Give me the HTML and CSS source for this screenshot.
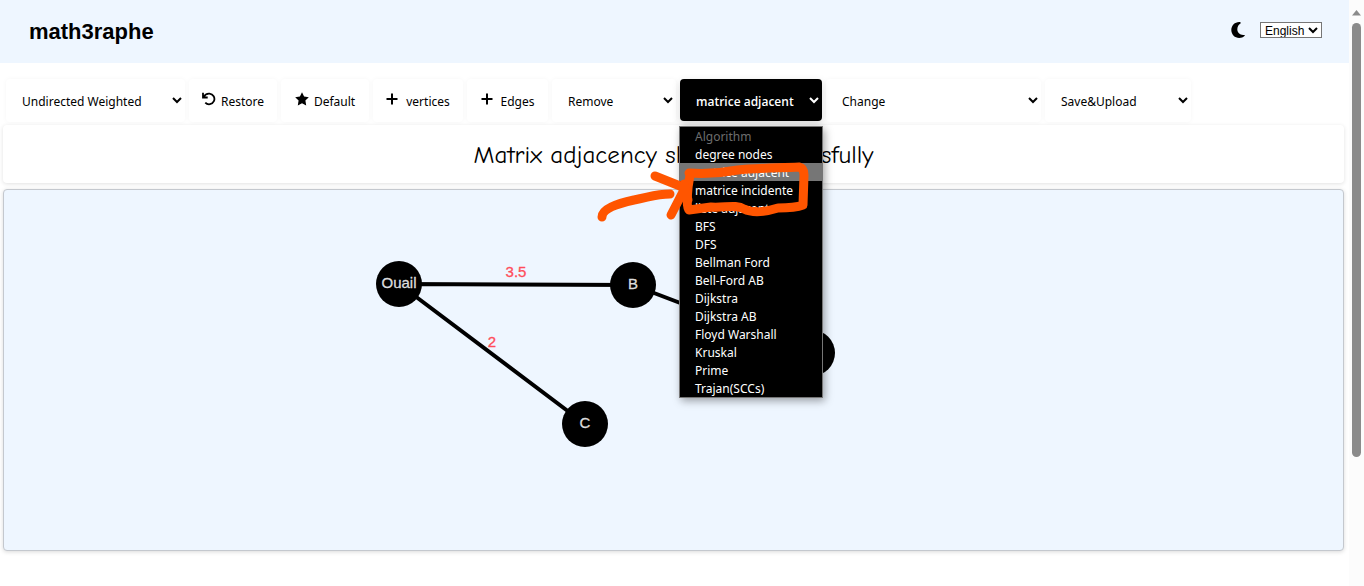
FILE: index.html
```html
<!DOCTYPE html>
<html lang="en">
<head>
<meta charset="utf-8">
<title>math3raphe</title>
<link rel="stylesheet" href="styles.css">
</head>
<body>
<div class="page">
  <header class="header">
    <h1 class="brand">math3raphe</h1>
    <div class="settings">
      <button class="theme" type="button" aria-label="Dark mode">
        <svg width="14" height="16" viewBox="0 0 14 16"><path d="M8.2 0C3.800 0 .3 3.600 .3 8s3.500 8 7.900 8c2.100 0 4-.8 5.500-2.200.4-.5.100-1-.5-.9-3.700.6-6.900-2-6.900-5.600 0-2.800 1.300-4.800 3.200-5.900.4-.4.300-1-.2-1.200C9 0 8.600 0 8.200 0z"/></svg>
      </button>
      <select class="language" aria-label="Language"><option>English</option></select>
    </div>
  </header>

  <nav class="toolbar" aria-label="Graph tools">
    <select class="tool tool-type" aria-label="Graph type"><option>Undirected Weighted</option></select>
    <button class="tool tool-action" type="button">
      <svg class="icon" width="14" height="14" viewBox="0 0 14 14"><path d="M1 .8v4.700h4.700M1.400 5.200C3 2.500 5.200 1.500 7.500 1.700a5.300 5.300 0 1 1-4.200 9" fill="none" stroke="#000" stroke-width="1.800"/></svg>
      Restore
    </button>
    <button class="tool tool-action" type="button">
      <svg class="icon" width="14" height="14" viewBox="0 0 14 14"><path d="M7 .2l2.100 4.300 4.700.7-3.400 3.400.8 4.900L7 11.200l-4.200 2.300.8-4.900L.2 5.200l4.700-.7z"/></svg>
      Default
    </button>
    <button class="tool tool-vertices" type="button">
      <svg class="icon icon-plus" width="12" height="14" viewBox="0 0 12 14"><path d="M6 1.500v11M.5 7h11" stroke="#000" stroke-width="2"/></svg>
      vertices
    </button>
    <button class="tool tool-edges" type="button">
      <svg class="icon icon-plus" width="12" height="14" viewBox="0 0 12 14"><path d="M6 1.500v11M.5 7h11" stroke="#000" stroke-width="2"/></svg>
      Edges
    </button>
    <select class="tool tool-remove" aria-label="Remove"><option>Remove</option></select>
    <div class="algorithm">
      <select class="tool tool-algorithm" aria-label="Algorithm"><option>matrice adjacent</option></select>
      <ul class="menu" role="listbox" aria-label="Algorithm">
        <li class="option option-disabled" role="option" aria-disabled="true">Algorithm</li>
        <li class="option" role="option">degree nodes</li>
        <li class="option option-current" role="option" aria-selected="true">matrice adjacent</li>
        <li class="option" role="option">matrice incidente</li>
        <li class="option" role="option">liste adjacent</li>
        <li class="option" role="option">BFS</li>
        <li class="option" role="option">DFS</li>
        <li class="option" role="option">Bellman Ford</li>
        <li class="option" role="option">Bell-Ford AB</li>
        <li class="option" role="option">Dijkstra</li>
        <li class="option" role="option">Dijkstra AB</li>
        <li class="option" role="option">Floyd Warshall</li>
        <li class="option" role="option">Kruskal</li>
        <li class="option" role="option">Prime</li>
        <li class="option" role="option">Trajan(SCCs)</li>
      </ul>
      <svg class="marker" width="220" height="70" viewBox="590 159 220 70" aria-hidden="true">
        <path d="M689 173C705 174 722 173 738 170C755 168 780 168 799 167Q804 168 804 175L803 205Q795 208 778 208C765 212 752 213 744 209C736 204 725 208 711 207L689 210C686 208 687 190 690 175"/>
        <path d="M655 176L685 188L671 215M684 184L688 200"/>
        <path d="M602 217C602 209 616 204 634 200C650 197 656 194 670 194"/>
      </svg>
    </div>
    <select class="tool tool-change" aria-label="Change"><option>Change</option></select>
    <select class="tool tool-save" aria-label="Save and upload"><option>Save&amp;Upload</option></select>
  </nav>

  <main class="workspace">
    <p class="status" role="status">Matrix adjacency showed successfully</p>
    <section class="canvas" aria-label="Graph">
      <svg class="graph" width="100%" height="360">
        <g class="edges">
          <path d="M395 94L629 95M395 94L581 234M629 95L808 163"/>
        </g>
        <g class="nodes">
          <circle cx="395" cy="94" r="23"/>
          <circle cx="629" cy="95" r="23"/>
          <circle cx="581" cy="234" r="23"/>
          <circle cx="808" cy="163" r="23"/>
        </g>
        <g class="names">
          <text x="395" y="98">Ouail</text>
          <text x="629" y="99">B</text>
          <text x="581" y="238">C</text>
        </g>
        <g class="weights">
          <text x="512" y="87">3.5</text>
          <text x="488" y="157">2</text>
        </g>
      </svg>
    </section>
  </main>
</div>
<div class="scrollbar" aria-hidden="true">
  <svg class="scroll-arrow" width="9" height="6" viewBox="0 0 9 6"><path d="M4.500 0L9 5.500H0z"/></svg>
  <div class="scroll-thumb"></div>
</div>
</body>
</html>
```
FILE: styles.css
```css
* { box-sizing: border-box; }

body {
  display: flex;
  min-height: 100vh;
  margin: 0;
  background: #fff;
  color: #000;
  font-family: "Segoe UI", "Noto Sans", sans-serif;
  font-size: 12px;
}

.page { flex: 1; min-width: 0; }

.header {
  display: flex;
  align-items: center;
  justify-content: space-between;
  height: 63px;
  padding: 0 27px 4px 29px;
  background: #eef6ff;
}

.brand {
  margin: 0;
  padding-top: 4px;
  font: bold 22px/26px "Liberation Sans", Arial, sans-serif;
}

.settings { display: flex; align-items: center; gap: 15px; }

.theme { display: flex; padding: 0; border: 0; background: none; }

.language {
  width: 62px;
  height: 16px;
  padding: 0;
  border: 1px solid #767676;
  border-radius: 0;
  background-color: #fff;
  color: #000;
  font: 12px/14px "Liberation Sans", Arial, sans-serif;
}

.toolbar { display: flex; gap: 4px; padding: 16px 6px 3px; }

.tool {
  height: 43px;
  border: 0;
  border-radius: 4px;
  background-color: #fff;
  box-shadow: 0 0 5px rgba(0, 0, 0, 0.04);
  color: #000;
  font: 12px/18px "Segoe UI", "Noto Sans", sans-serif;
}

select.tool { padding: 2px 0 0 12px; }

button.tool {
  display: flex;
  align-items: center;
  justify-content: center;
  gap: 5px;
  padding: 2px 0 0;
}

.icon { margin-bottom: 6px; }
.icon-plus { margin-right: 3px; }

.tool-type { width: 179px; }
.tool-action { width: 88px; }
.tool-vertices { width: 90px; }
.tool-edges { width: 81px; }
.tool-remove { width: 124px; }
.tool-change { width: 215px; }
.tool-save { width: 146px; }

.algorithm { position: relative; width: 142px; }

.tool-algorithm {
  display: block;
  width: 100%;
  height: 42px;
  background-color: #000;
  box-shadow: 0 3px 8px rgba(0, 0, 0, 0.15);
  color: #fff;
  font-family: "Segoe UI", "Open Sans", sans-serif;
  font-weight: 600;
}

.menu {
  position: absolute;
  z-index: 2;
  top: 47px;
  left: -1px;
  width: 144px;
  margin: 0;
  padding: 0;
  border: 1px solid #767676;
  background: #000;
  box-shadow: 2px 3px 8px rgba(0, 0, 0, 0.35);
  color: #fff;
  list-style: none;
}

.option { padding: 2px 0 0 15px; line-height: 16px; white-space: nowrap; }
.option-disabled { color: #6d6d6d; }
.option-current { background: #767676; }

.marker {
  position: absolute;
  z-index: 3;
  top: 80px;
  left: -90px;
  fill: none;
  stroke: #ff5500;
  stroke-width: 9;
  stroke-linecap: round;
  stroke-linejoin: round;
  pointer-events: none;
}

.workspace { padding: 0 5px 35px 3px; }

.status {
  margin: 0 0 6px;
  padding: 13px 0 11px;
  border-radius: 4px;
  background: #fff;
  box-shadow: 0 1px 4px rgba(0, 0, 0, 0.12);
  font: 25px/34px "Comic Sans MS", "Comic Neue", "Open Sans", sans-serif;
  text-align: center;
}

.canvas {
  border: 1px solid #c4c8ce;
  border-radius: 4px;
  background: #eef6ff;
  box-shadow: 0 1px 4px rgba(0, 0, 0, 0.15);
}

.graph {
  display: block;
  font-family: "Liberation Sans", Arial, sans-serif;
  text-anchor: middle;
}

.edges { fill: none; stroke: #000; stroke-width: 4; }
.names { fill: #ddd; font-size: 15px; stroke: #ddd; stroke-width: 0.3; }
.weights { fill: #ff4d5a; font-size: 15px; stroke: #ff4d5a; stroke-width: 0.3; }

.scrollbar {
  display: flex;
  flex-direction: column;
  align-items: center;
  gap: 7px;
  width: 15px;
  padding-top: 10px;
  background: #fcfcfc;
}

.scroll-arrow { fill: #8b8b8b; }

.scroll-thumb {
  width: 9px;
  height: 74vh;
  border-radius: 5px;
  background: #8b8b8b;
}
```
